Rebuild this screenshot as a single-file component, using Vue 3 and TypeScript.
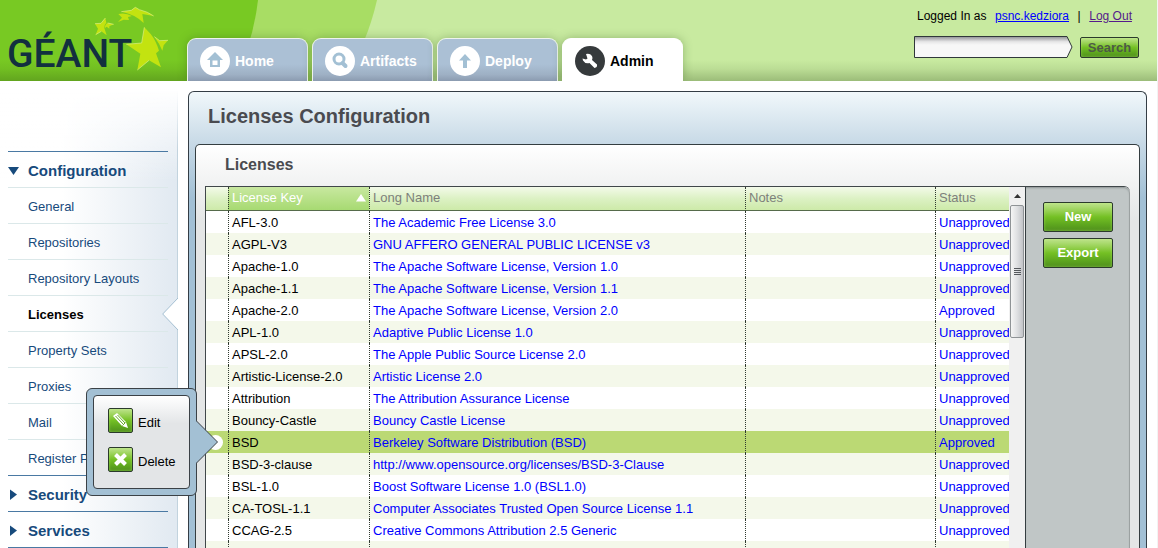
<script setup lang="ts">
import { ref } from 'vue'

interface License {
  key: string
  name: string
  notes: string
  status: 'Approved' | 'Unapproved'
}

const tabs = ['Home', 'Artifacts', 'Deploy', 'Admin']
const activeTab = ref('Admin')

const configItems = [
  'General',
  'Repositories',
  'Repository Layouts',
  'Licenses',
  'Property Sets',
  'Proxies',
  'Mail',
  'Register Pro',
]
const activeItem = ref('Licenses')
const closedSections = ['Security', 'Services']

const query = ref('')
const selectedKey = ref('BSD')

const make = (key: string, name: string, status: License['status'] = 'Unapproved'): License => ({
  key,
  name,
  notes: '',
  status,
})

const licenses: License[] = [
  make('AFL-3.0', 'The Academic Free License 3.0'),
  make('AGPL-V3', 'GNU AFFERO GENERAL PUBLIC LICENSE v3'),
  make('Apache-1.0', 'The Apache Software License, Version 1.0'),
  make('Apache-1.1', 'The Apache Software License, Version 1.1'),
  make('Apache-2.0', 'The Apache Software License, Version 2.0', 'Approved'),
  make('APL-1.0', 'Adaptive Public License 1.0'),
  make('APSL-2.0', 'The Apple Public Source License 2.0'),
  make('Artistic-License-2.0', 'Artistic License 2.0'),
  make('Attribution', 'The Attribution Assurance License'),
  make('Bouncy-Castle', 'Bouncy Castle License'),
  make('BSD', 'Berkeley Software Distribution (BSD)', 'Approved'),
  make('BSD-3-clause', 'http://www.opensource.org/licenses/BSD-3-Clause'),
  make('BSL-1.0', 'Boost Software License 1.0 (BSL1.0)'),
  make('CA-TOSL-1.1', 'Computer Associates Trusted Open Source License 1.1'),
  make('CCAG-2.5', 'Creative Commons Attribution 2.5 Generic'),
  make('CDDL-1.0', 'Common Development and Distribution License (CDDL) 1.0'),
]
</script>

<template>
  <div class="page">
    <header class="header">
      <svg class="swoosh" viewBox="0 0 400 81" aria-hidden="true">
        <path d="M0 0H377Q367 44 343 81H0Z" fill="#a8dd64" />
        <path d="M0 0H258Q253 44 233 81H0Z" fill="#78c923" />
      </svg>
      <div class="shade"></div>

      <a class="logo" href="#" aria-label="GÉANT">
        <svg viewBox="0 0 540 243">
          <text class="wordmark" x="21" y="201">GÉANT</text>
          <g fill="#c3e310">
            <path d="M433 82L452 102Q468 122 477 152L468 160L483 202L447 181L412 210L421 161L379 133L425 129Z" />
            <path d="M463 110L479 122L504 121L491 136L487 152Q478 130 463 110Z" />
            <path d="M364 35L394 31L406 22L418 29Q444 35 461 48L427 42L431 69Q406 43 364 35Z" />
            <path d="M355 42Q376 37 396 48L384 51L387 60L371 59L354 66L366 53Z" />
            <path d="M316 54L319 68Q312 74 313 84L320 106L304 94L287 104L294 86L285 71L303 70Z" />
            <path d="M341 73L328 79L328 86L320 80L315 84Q314 73 323 69Z" />
          </g>
          <g fill="none" stroke="#dcf08a" stroke-width="2">
            <path d="M379 133L425 129L433 82M412 210L447 181" />
            <path d="M463 110L479 122L504 121" />
            <path d="M364 35L394 31L406 22L418 29Q444 35 461 48" />
            <path d="M285 71L303 70L316 54M323 69L341 73M287 104L304 94" />
          </g>
        </svg>
      </a>

      <nav class="tabs">
        <a
          v-for="tab in tabs"
          :key="tab"
          href="#"
          class="tab"
          :class="{ active: tab === activeTab }"
          @click.prevent="activeTab = tab"
        >
          <svg class="tab-icon" viewBox="0 0 30 30" aria-hidden="true">
            <circle class="disc" cx="15" cy="15" r="15" />
            <path
              v-if="tab === 'Home'"
              class="glyph"
              fill-rule="evenodd"
              d="M15 6L23 14H20V21H10V14H7ZM12.500 14.500V19H17.500V14.500Z"
            />
            <g v-else-if="tab === 'Artifacts'" class="line">
              <circle cx="14" cy="13" r="5" stroke-width="3" />
              <path d="M17.500 17L20.500 20" stroke-width="4" />
            </g>
            <path v-else-if="tab === 'Deploy'" class="glyph" d="M15 8L21 14.500H17V22H13V14.500H9Z" />
            <path
              v-else
              class="glyph"
              d="M11 8Q15 7 17 10Q18 12 17 14L22 18.500Q22.500 21.500 19.500 22L14.500 17Q10 18 8 14.500L7.500 12.500L11 13.500L12.500 12.500Z"
            />
          </svg>
          <span>{{ tab }}</span>
        </a>
      </nav>

      <div class="account">
        <div class="session">
          <span>Logged In as</span>
          <a href="#" class="user">psnc.kedziora</a>
          <span>|</span>
          <a href="#" class="logout">Log Out</a>
        </div>
        <form class="search" @submit.prevent>
          <div class="search-box">
            <svg viewBox="0 0 159 22" aria-hidden="true">
              <defs>
                <linearGradient id="field" x1="0" y1="0" x2="0" y2="1">
                  <stop offset="0" stop-color="#8f9194" />
                  <stop offset="0.25" stop-color="#e6e6e7" />
                  <stop offset="0.4" stop-color="#f7f7f7" />
                </linearGradient>
              </defs>
              <path d="M.5 .5H153L158 11L153 21.500H.5Z" fill="url(#field)" stroke="#30383a" />
            </svg>
            <input v-model="query" type="text" aria-label="Search artifacts" />
          </div>
          <button class="green search-button" type="submit">Search</button>
        </form>
      </div>
    </header>

    <div class="body">
      <aside class="sidebar">
        <nav class="menu">
          <a href="#" class="section open">
            <svg viewBox="0 0 20 12" aria-hidden="true"><path d="M0 2H11L5.500 10Z" /></svg>
            <span>Configuration</span>
          </a>
          <a
            v-for="item in configItems"
            :key="item"
            href="#"
            class="item"
            :class="{ current: item === activeItem }"
            @click.prevent="activeItem = item"
          >
            {{ item }}
            <svg v-if="item === activeItem" class="notch" viewBox="0 0 16 32" aria-hidden="true">
              <path d="M16 0L.7 16L16 32" fill="#fff" stroke="#a4bfd2" />
            </svg>
          </a>
          <a v-for="section in closedSections" :key="section" href="#" class="section closed">
            <svg viewBox="0 0 20 12" aria-hidden="true"><path d="M2 .5L9 5.500L2 11Z" /></svg>
            <span>{{ section }}</span>
          </a>
        </nav>
      </aside>

      <main class="panel">
        <h1>Licenses Configuration</h1>
        <section class="card">
          <h2>Licenses</h2>
          <div class="frame">
            <div class="grid">
              <table>
                <colgroup>
                  <col class="c-mark" />
                  <col class="c-key" />
                  <col />
                  <col class="c-notes" />
                  <col class="c-status" />
                </colgroup>
                <thead>
                  <tr>
                    <th></th>
                    <th class="sorted">
                      <div class="sort-head">
                        License Key
                        <svg viewBox="0 0 10 8" aria-hidden="true"><path d="M5 0L10 7.500H0Z" fill="#fff" /></svg>
                      </div>
                    </th>
                    <th>Long Name</th>
                    <th>Notes</th>
                    <th>Status</th>
                  </tr>
                </thead>
                <tbody>
                  <tr
                    v-for="row in licenses"
                    :key="row.key"
                    :class="{ selected: row.key === selectedKey }"
                    @click="selectedKey = row.key"
                  >
                    <td><span v-if="row.key === selectedKey" class="dot"></span></td>
                    <td>{{ row.key }}</td>
                    <td class="blue">{{ row.name }}</td>
                    <td class="blue">{{ row.notes }}</td>
                    <td class="blue">{{ row.status }}</td>
                  </tr>
                </tbody>
              </table>
            </div>
            <div class="scrollbar">
              <svg class="up" viewBox="0 0 15 18" aria-hidden="true"><path d="M7.500 7L11 11H4Z" fill="#333" /></svg>
              <div class="thumb"><i></i><i></i><i></i><i></i></div>
            </div>
            <div class="actions">
              <button class="green" type="button">New</button>
              <button class="green" type="button">Export</button>
            </div>
          </div>
        </section>
      </main>
    </div>

    <div class="popup">
      <svg class="pointer" viewBox="0 0 23 44" aria-hidden="true">
        <path d="M0 .5L21.500 22L0 43.500" fill="#a3c0d4" stroke="#3b4146" />
      </svg>
      <div class="popup-inner">
        <button type="button" class="action">
          <span class="green square">
            <svg viewBox="0 0 23 23" aria-hidden="true">
              <path d="M4 7L8 4L17 13L19 19L13 17Z" fill="#fff" />
              <path d="M6.500 7L14.500 15.500M8.500 6L16 14" stroke="#63ab21" fill="none" />
              <path d="M13.500 16.500L16.500 13.500" stroke="#63ab21" fill="none" />
            </svg>
          </span>
          <span class="action-label">Edit</span>
        </button>
        <button type="button" class="action">
          <span class="green square">
            <svg viewBox="0 0 23 23" aria-hidden="true">
              <path d="M6.500 6.500L16.500 16.500M16.500 6.500L6.500 16.500" stroke="#fff" stroke-width="4" fill="none" />
            </svg>
          </span>
          <span class="action-label">Delete</span>
        </button>
      </div>
    </div>
  </div>
</template>

<style>
body {
  margin: 0;
}
</style>

<style scoped>
* {
  box-sizing: border-box;
}

.page {
  position: relative;
  display: flex;
  flex-direction: column;
  height: 100vh;
  overflow: hidden;
  border-right: 1px solid #f3f3f3;
  background: #fff;
  color: #000;
  font: 13px/16px "Liberation Sans", Arial, sans-serif;
}

a {
  color: inherit;
  text-decoration: none;
}

svg {
  display: block;
}

button {
  margin: 0;
  font-family: inherit;
  cursor: pointer;
}

/* Header */
.header {
  position: relative;
  display: flex;
  flex: none;
  height: 81px;
  background: #c8eaa0;
}

.swoosh {
  position: absolute;
  left: 0;
  top: 0;
  width: 400px;
  height: 81px;
}

.shade {
  position: absolute;
  inset: 0;
  background: linear-gradient(transparent 74%, rgba(40, 70, 20, 0.08) 85%, rgba(40, 70, 20, 0.28));
}

.logo {
  position: relative;
  flex: none;
  width: 187px;
}

.logo svg {
  width: 180px;
  height: 81px;
}

.wordmark {
  font: 500 117px Roboto, sans-serif;
  fill: #12303f;
}

.tabs {
  position: relative;
  display: flex;
  align-items: flex-end;
  gap: 4px;
}

.tab {
  display: flex;
  align-items: center;
  gap: 5px;
  width: 121px;
  height: 43px;
  padding: 2px 0 0 12px;
  border: 1px solid #eef3ee;
  border-bottom: 0;
  border-radius: 9px 9px 0 0;
  background: linear-gradient(#abc0d5 60%, #9eb0c4 85%, #8b9bb0);
  box-shadow: 0 0 10px rgba(50, 90, 30, 0.35);
  color: #fff;
  font-size: 14px;
  font-weight: bold;
  clip-path: inset(-10px -10px 0 -10px);
}

.tab.active {
  border-color: #fff;
  background: #fff;
  color: #000;
}

.tab-icon {
  width: 30px;
  height: 30px;
}

.disc {
  fill: #fff;
}

.glyph {
  fill: #a3c0d4;
}

.line {
  fill: none;
  stroke: #a3c0d4;
  stroke-linecap: round;
}

.active .disc {
  fill: #363a3c;
}

.active .glyph {
  fill: #fff;
}

.account {
  position: relative;
  margin-left: auto;
  padding: 8px 18px 0 0;
}

.session {
  display: flex;
  justify-content: space-between;
  padding: 0 7px 0 3px;
  font-size: 12px;
}

.session a {
  text-decoration: underline;
}

.user {
  color: #00f;
}

.logout {
  color: #551a8b;
}

.search {
  display: flex;
  align-items: center;
  gap: 7px;
  margin-top: 12px;
}

.search-box {
  position: relative;
  width: 159px;
  height: 22px;
}

.search-box svg {
  width: 159px;
  height: 22px;
}

.search-box input {
  position: absolute;
  inset: 1px 8px 1px 1px;
  width: 150px;
  padding: 0 4px;
  border: 0;
  outline: 0;
  background: transparent;
  font: inherit;
}

.green {
  border: 1px solid #2b3a2c;
  border-radius: 2px;
  background: linear-gradient(#bfe48e, #9bd359 25%, #74c024 50%, #5fa81f 75%, #4f8f1c);
  box-shadow: inset 0 0 3px rgba(190, 240, 120, 0.5);
  color: #fff;
  font-size: 13px;
  font-weight: bold;
  line-height: 16px;
}

.search-button {
  width: 59px;
  height: 21px;
  padding: 1px 0 0;
  color: #4c5a45;
}

/* Sidebar */
.body {
  display: flex;
  flex: 1;
  min-height: 0;
}

.sidebar {
  flex: none;
  width: 178px;
  padding: 70px 9px 0 8px;
  border-right: 1px solid;
  border-image: linear-gradient(#fff 10px, #c2d3de 70px) 1;
  background:
    linear-gradient(#fff 8px, rgba(255, 255, 255, 0) 100px),
    linear-gradient(90deg, #fff 35%, #e1e9f1);
}

.section,
.item {
  display: flex;
  align-items: center;
  height: 36px;
  padding-top: 2px;
  color: #174a7c;
}

.section {
  border-top: 1px solid #4a79a3;
  font-size: 15px;
  font-weight: bold;
}

.section svg {
  width: 20px;
  height: 12px;
  fill: #174a7c;
}

.item {
  position: relative;
  padding-left: 20px;
  border-top: 1px solid #dbe8e9;
}

.closed:last-child {
  height: 37px;
  border-bottom: 1px solid #4a79a3;
}

.current {
  color: #000;
  font-weight: bold;
}

.notch {
  position: absolute;
  right: -10px;
  top: 2px;
  width: 16px;
  height: 32px;
}

/* Main panel */
.panel {
  display: flex;
  flex: 1;
  flex-direction: column;
  min-width: 0;
  margin: 10px 10px 0;
  padding: 0 6px;
  border: 1px solid #343d45;
  border-bottom: 0;
  border-radius: 6px 6px 0 0;
  background: linear-gradient(#f1f8fb, #c7d9e6 52px, #a2c0d5 106px);
}

h1 {
  margin: 0;
  padding: 12px 13px 16px;
  color: #4a4b50;
  font-size: 20px;
  line-height: 24px;
}

.card {
  display: flex;
  flex: 1;
  flex-direction: column;
  min-height: 0;
  padding: 0 9px;
  border: 1px solid #343d40;
  border-bottom: 0;
  border-radius: 5px 5px 0 0;
  background: linear-gradient(#fff, #e4e6e6 76px);
}

h2 {
  margin: 0;
  padding: 10px 20px 11px;
  color: #4a4b50;
  font-size: 16px;
  line-height: 20px;
}

.frame {
  display: flex;
  flex: 1;
  min-height: 0;
  border-top: 1px solid #40474a;
  border-left: 1px solid #40474a;
  border-radius: 0 6px 0 0;
}

.grid {
  flex: 1;
  min-width: 0;
  overflow: hidden;
  background: #fff;
}

table {
  width: 100%;
  border-collapse: separate;
  border-spacing: 0;
  table-layout: fixed;
}

.c-mark {
  width: 22px;
}

.c-key {
  width: 141px;
}

.c-notes {
  width: 190px;
}

.c-status {
  width: 74px;
}

th,
td {
  height: 22px;
  padding: 2px 0 0 3px;
  border-left: 1px dotted #303a30;
  text-align: left;
  white-space: nowrap;
}

th:first-child,
td:first-child {
  padding: 0 2px;
  border-left: 0;
}

th {
  height: 24px;
  padding: 0 0 1px 3px;
  border-bottom: 1px solid #566b4b;
  background: linear-gradient(#f3fae9, #dcf1c4 50%, #cdeaa9);
  color: #7d807b;
  font-weight: normal;
}

th.sorted {
  background: linear-gradient(#c8e8a0, #a7da72);
  color: #fff;
}

.sort-head {
  display: flex;
  align-items: center;
  justify-content: space-between;
  padding-right: 3px;
}

.sort-head svg {
  width: 10px;
  height: 8px;
}

tbody tr:nth-child(even) {
  background: #f4f8ea;
}

tbody tr.selected {
  background: #bbd974;
}

.blue {
  color: #00f;
}

.dot {
  display: block;
  width: 15px;
  height: 15px;
  border-radius: 50%;
  background: #fff;
}

.scrollbar {
  flex: none;
  width: 16px;
  padding: 0 1px;
  background: #f0f0f0;
}

.up {
  width: 15px;
  height: 18px;
}

.thumb {
  display: flex;
  flex-direction: column;
  align-items: center;
  justify-content: center;
  gap: 1px;
  height: 133px;
  border: 1px solid #8f9396;
  border-radius: 2px;
  background: linear-gradient(90deg, #f5f5f5, #dfe0e2 50%, #c2c4c8);
}

.thumb i {
  width: 7px;
  height: 1px;
  background: #55585c;
}

.actions {
  display: flex;
  flex: none;
  flex-direction: column;
  gap: 6px;
  width: 105px;
  padding: 15px 16px 0 17px;
  border-left: 1px solid #343d40;
  border-right: 1px solid #9ba1a1;
  border-radius: 0 6px 0 0;
  background: #c0c6c6;
  box-shadow: inset 0 2px 2px -1px #8d9494;
}

.actions .green {
  height: 30px;
  padding: 0;
}

/* Row action popup */
.popup {
  position: absolute;
  left: 86px;
  top: 388px;
  width: 111px;
  padding: 6px;
  border: 1px solid #3b4146;
  border-radius: 6px;
  background: #a3c0d4;
}

.pointer {
  position: absolute;
  left: 109px;
  top: 31px;
  width: 23px;
  height: 44px;
}

.popup-inner {
  display: flex;
  flex-direction: column;
  align-items: flex-start;
  gap: 14px;
  padding: 12px 14px 16px;
  border: 1px solid #3b4146;
  border-radius: 4px;
  background: linear-gradient(#fff, #e3e5e7 30%);
}

.action {
  display: flex;
  align-items: center;
  gap: 5px;
  padding: 0;
  border: 0;
  background: none;
  color: #000;
  font-size: 13px;
}

.action-label {
  padding-top: 4px;
}

.square {
  width: 25px;
  height: 25px;
}

.square svg {
  width: 23px;
  height: 23px;
}
</style>
